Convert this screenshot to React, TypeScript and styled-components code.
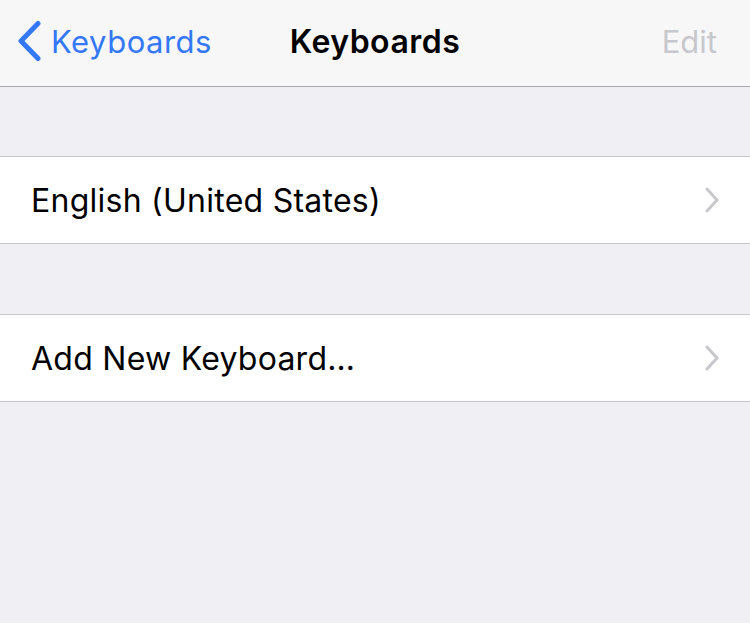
import React from "react"
import styled, { createGlobalStyle } from "styled-components"

const GlobalStyle = createGlobalStyle`
    html, body {
        margin: 0;
        padding: 0;
        background: #efeff4;
        font-family: Inter, "Noto Sans", sans-serif;
        -webkit-font-smoothing: antialiased;
    }
`

const items = ["English (United States)", "Add New Keyboard…"]

const BackChevron = () => (
    <svg width="26" height="42" viewBox="0 0 26 42">
        <path d="M22 3.5 L5 21 L22 38.5" fill="none" stroke="#3478f6" strokeWidth="5" strokeLinecap="round" strokeLinejoin="round" />
    </svg>
)

const RowChevron = () => (
    <svg width="16" height="26" viewBox="0 0 16 26">
        <path d="M3 2 L13 13 L3 24" fill="none" stroke="#c7c7cc" strokeWidth="3" strokeLinecap="round" strokeLinejoin="round" />
    </svg>
)

export const App: React.FC = () => {
    return (
        <S.Screen>
            <GlobalStyle />
            <S.NavBar>
                <S.BackButton>
                    <BackChevron />
                    <span>Keyboards</span>
                </S.BackButton>
                <S.Title>Keyboards</S.Title>
                <S.EditButton>Edit</S.EditButton>
            </S.NavBar>
            {items.map((item) => (
                <S.Group key={item}>
                    <S.Row>
                        <S.Label>{item}</S.Label>
                        <RowChevron />
                    </S.Row>
                </S.Group>
            ))}
        </S.Screen>
    )
}

const S = {
    Screen: styled.div`
        width: 750px;
        height: 623px;
        background: #efeff4;
        overflow: hidden;
    `,
    NavBar: styled.div`
        box-sizing: border-box;
        height: 87px;
        display: grid;
        grid-template-columns: 1fr auto 1fr;
        align-items: center;
        background: #f7f7f8;
        border-bottom: 1px solid #a7a7aa;
        padding: 0 16px 4px 16px;
    `,
    BackButton: styled.div`
        display: flex;
        align-items: center;
        gap: 9px;
        color: #3478f6;
        font-size: 31px;
        letter-spacing: 0.5px;
        justify-self: start;
    `,
    Title: styled.div`
        font-size: 32px;
        font-weight: 600;
        letter-spacing: 0.5px;
        color: #000;
    `,
    EditButton: styled.div`
        justify-self: end;
        padding-right: 17px;
        font-size: 31px;
        color: #c7c7cc;
    `,
    Group: styled.div`
        margin-top: 69px;
        background: #fff;
        border-top: 1px solid #c8c7cc;
        border-bottom: 1px solid #c8c7cc;
        & + & {
            margin-top: 70px;
        }
    `,
    Row: styled.div`
        height: 86px;
        display: flex;
        align-items: center;
        justify-content: space-between;
        padding: 0 30px 0 31px;
    `,
    Label: styled.span`
        font-size: 32px;
        letter-spacing: 0.25px;
        color: #000;
    `,
}

export default App
